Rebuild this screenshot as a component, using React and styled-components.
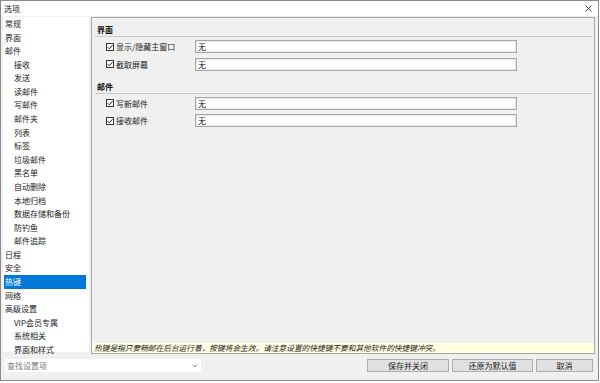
import styled, { createGlobalStyle } from 'styled-components';

const GlobalStyle = createGlobalStyle`
	html, body {
		margin: 0;
		padding: 0;
		background: #ffffff;
	}
	* {
		box-sizing: border-box;
	}
`;

const FONT = `"Noto Sans CJK SC", "Noto Sans", "Liberation Sans", sans-serif`;

const treeItems = [
	{ label: '常规', level: 0 },
	{ label: '界面', level: 0 },
	{ label: '邮件', level: 0 },
	{ label: '接收', level: 1 },
	{ label: '发送', level: 1 },
	{ label: '读邮件', level: 1 },
	{ label: '写邮件', level: 1 },
	{ label: '邮件夹', level: 1 },
	{ label: '列表', level: 1 },
	{ label: '标签', level: 1 },
	{ label: '垃圾邮件', level: 1 },
	{ label: '黑名单', level: 1 },
	{ label: '自动删除', level: 1 },
	{ label: '本地归档', level: 1 },
	{ label: '数据存储和备份', level: 1 },
	{ label: '防钓鱼', level: 1 },
	{ label: '邮件追踪', level: 1 },
	{ label: '日程', level: 0 },
	{ label: '安全', level: 0 },
	{ label: '热键', level: 0, selected: true },
	{ label: '网络', level: 0 },
	{ label: '高级设置', level: 0 },
	{ label: 'VIP会员专属', level: 1 },
	{ label: '系统相关', level: 1 },
	{ label: '界面和样式', level: 1 },
];

const sections = [
	{ title: '界面', rows: ['显示/隐藏主窗口', '截取屏幕'] },
	{ title: '邮件', rows: ['写新邮件', '接收邮件'] },
];

export default function App() {
	return (
		<>
			<GlobalStyle />
			<Window>
				<TitleBar>
					<span>选项</span>
					<CloseIcon viewBox='0 0 8 8'>
						<path d='M0.5 0.5 L7.5 7.5 M7.5 0.5 L0.5 7.5' />
					</CloseIcon>
				</TitleBar>
				<Body>
					<Tree>
						{treeItems.map(item => (
							<TreeRow key={item.label} $level={item.level} $selected={item.selected}>
								{item.label}
							</TreeRow>
						))}
					</Tree>
					<Panel>
						{sections.map((section, i) => (
							<Section key={section.title} $first={i === 0}>
								<SectionTitle>{section.title}</SectionTitle>
								<Rows>
									{section.rows.map(row => (
										<HotkeyRow key={row}>
											<CheckLabel>
												<CheckBox viewBox='0 0 8 8'>
													<rect x='0.5' y='0.5' width='7' height='7' />
													<path d='M1.6 4.1 L3.3 5.8 L6.5 2.2' />
												</CheckBox>
												<span>{row}</span>
											</CheckLabel>
											<KeyInput>无</KeyInput>
										</HotkeyRow>
									))}
								</Rows>
							</Section>
						))}
						<InfoBar>热键是指只要畅邮在后台运行着，按键将会生效。请注意设置的快捷键不要和其他软件的快捷键冲突。</InfoBar>
					</Panel>
				</Body>
				<Footer>
					<SearchBox>
						<span>查找设置项</span>
						<Chevron viewBox='0 0 8 5'>
							<path d='M0.8 0.8 L4 3.8 L7.2 0.8' />
						</Chevron>
					</SearchBox>
					<Buttons>
						<Button $width={82}>保存并关闭</Button>
						<Button $width={81}>还原为默认值</Button>
						<Button $width={57}>取消</Button>
					</Buttons>
				</Footer>
			</Window>
		</>
	);
}

const Window = styled.div`
	width: 599px;
	height: 381px;
	border: 1px solid #8c8c8c;
	background: #f0f0f0;
	display: flex;
	flex-direction: column;
	font-family: ${FONT};
	font-size: 8px;
	color: #1a1a1a;
`;

const TitleBar = styled.div`
	height: 15px;
	background: #ffffff;
	display: flex;
	align-items: center;
	justify-content: space-between;
	padding: 0 6px 1px 3px;
	font-size: 8px;
	line-height: 15px;
	color: #222;
`;

const CloseIcon = styled.svg`
	width: 7px;
	height: 7px;
	path {
		stroke: #333;
		stroke-width: 1;
		fill: none;
	}
`;

const Body = styled.div`
	display: flex;
	gap: 2px;
	padding: 1px 2px 0 2px;
	height: 338px;
`;

const Tree = styled.div`
	width: 86px;
	height: 335px;
	background: #ffffff;
	padding: 0 3px 0 1px;
	display: flex;
	flex-direction: column;
`;

const TreeRow = styled.div`
	height: 13.58px;
	line-height: 13.58px;
	flex-shrink: 0;
	padding-left: ${p => (p.$level ? 10 : 1)}px;
	white-space: nowrap;
	background: ${p => (p.$selected ? '#0078d7' : 'transparent')};
	color: ${p => (p.$selected ? '#ffffff' : '#1a1a1a')};
`;

const Panel = styled.div`
	flex: 1;
	margin-right: 1px;
	border: 1px solid #a8a8a8;
	display: flex;
	flex-direction: column;
	padding: 7px 2px 0 3px;
`;

const Section = styled.div`
	margin-top: ${p => (p.$first ? 0 : 11)}px;
`;

const SectionTitle = styled.div`
	font-weight: bold;
	height: 12px;
	line-height: 10px;
	padding-left: 2px;
	border-bottom: 1px solid #c9c9c9;
	color: #111;
`;

const Rows = styled.div`
	display: flex;
	flex-direction: column;
	gap: 4.5px;
	padding: 3px 0 0 11px;
`;

const HotkeyRow = styled.div`
	display: flex;
	align-items: center;
	height: 13px;
`;

const CheckLabel = styled.label`
	width: 89px;
	display: flex;
	align-items: center;
	gap: 2px;
	white-space: nowrap;
`;

const CheckBox = styled.svg`
	width: 8px;
	height: 8px;
	flex-shrink: 0;
	rect {
		fill: #ffffff;
		stroke: #333;
		stroke-width: 1;
	}
	path {
		fill: none;
		stroke: #222;
		stroke-width: 1;
	}
`;

const KeyInput = styled.div`
	width: 322px;
	height: 13px;
	background: #ffffff;
	border: 1px solid #a6a6a6;
	box-shadow: inset 0 0 0 0.5px #d6d6d6;
	padding-left: 2px;
	line-height: 11px;
	color: #111;
`;

const InfoBar = styled.div`
	margin: auto -2px 0 -3px;
	height: 10px;
	background: #ffffe1;
	font-style: italic;
	font-size: 7.7px;
	line-height: 10px;
	padding-left: 2px;
	white-space: nowrap;
	color: #222;
`;

const Footer = styled.div`
	flex: 1;
	display: flex;
	align-items: flex-start;
	justify-content: space-between;
	padding: 5px 5px 0 4px;
`;

const SearchBox = styled.div`
	width: 196px;
	height: 13px;
	background: #ffffff;
	display: flex;
	align-items: center;
	justify-content: space-between;
	padding: 0 3px 0 2px;
	color: #7a7a7a;
	line-height: 13px;
`;

const Chevron = styled.svg`
	width: 6px;
	height: 4px;
	path {
		fill: none;
		stroke: #666;
		stroke-width: 1;
	}
`;

const Buttons = styled.div`
	display: flex;
	gap: 3px;
`;

const Button = styled.button`
	width: ${p => p.$width}px;
	height: 13px;
	padding: 0;
	margin: 0;
	background: #e1e1e1;
	border: 1px solid #adadad;
	font-family: ${FONT};
	font-size: 8px;
	line-height: 11px;
	color: #1a1a1a;
	text-align: center;
`;
